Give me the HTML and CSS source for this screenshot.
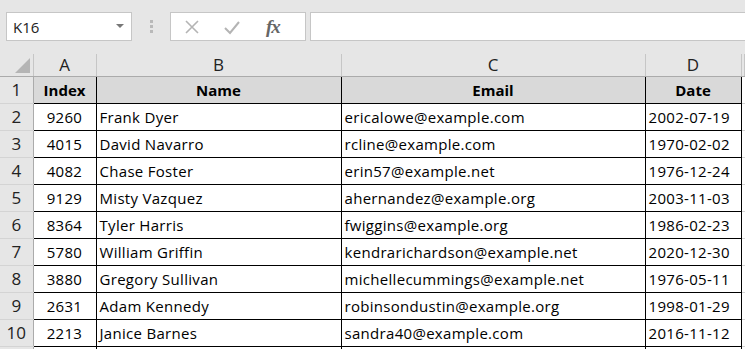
FILE: index.html
```html
<!DOCTYPE html>
<html>
<head>
<meta charset="utf-8">
<title>Sheet</title>
<link rel="stylesheet" href="styles.css">
</head>
<body>
<div class="toolbar">
  <div class="namebox">
    <span>K16</span>
    <svg class="caret" width="8" height="5" viewBox="0 0 8 5"><path d="M0 0h8L4 4z" fill="#777"/></svg>
  </div>
  <div class="grip"><i></i><i></i><i></i></div>
  <div class="fxbox">
    <svg width="16" height="16" viewBox="0 0 16 16"><path d="M2 2l12 12M14 2L2 14" stroke="#b4b4b4" stroke-width="1.6" fill="none"/></svg>
    <svg width="18" height="16" viewBox="0 0 18 16"><path d="M2 9l5 5L16 3" stroke="#b4b4b4" stroke-width="2" fill="none"/></svg>
    <span class="fx">fx</span>
  </div>
  <div class="formula"></div>
</div>

<div class="grid">
<table class="sheet">
  <colgroup>
    <col class="c-row"><col class="c-a"><col class="c-b"><col class="c-c"><col class="c-d"><col>
  </colgroup>
  <tr class="colhead">
    <th class="corner"><span class="tri"></span></th>
    <th>A</th><th>B</th><th>C</th><th>D</th><th></th>
  </tr>
  <tr class="title">
    <th class="rownum">1</th>
    <td>Index</td><td>Name</td><td>Email</td><td>Date</td><td class="empty"></td>
  </tr>
  <tr><th class="rownum">2</th><td class="num">9260</td><td>Frank Dyer</td><td>ericalowe@example.com</td><td>2002-07-19</td><td class="empty"></td></tr>
  <tr><th class="rownum">3</th><td class="num">4015</td><td>David Navarro</td><td>rcline@example.com</td><td>1970-02-02</td><td class="empty"></td></tr>
  <tr><th class="rownum">4</th><td class="num">4082</td><td>Chase Foster</td><td>erin57@example.net</td><td>1976-12-24</td><td class="empty"></td></tr>
  <tr><th class="rownum">5</th><td class="num">9129</td><td>Misty Vazquez</td><td>ahernandez@example.org</td><td>2003-11-03</td><td class="empty"></td></tr>
  <tr><th class="rownum">6</th><td class="num">8364</td><td>Tyler Harris</td><td>fwiggins@example.org</td><td>1986-02-23</td><td class="empty"></td></tr>
  <tr><th class="rownum">7</th><td class="num">5780</td><td>William Griffin</td><td>kendrarichardson@example.net</td><td>2020-12-30</td><td class="empty"></td></tr>
  <tr><th class="rownum">8</th><td class="num">3880</td><td>Gregory Sullivan</td><td>michellecummings@example.net</td><td>1976-05-11</td><td class="empty"></td></tr>
  <tr><th class="rownum">9</th><td class="num">2631</td><td>Adam Kennedy</td><td>robinsondustin@example.org</td><td>1998-01-29</td><td class="empty"></td></tr>
  <tr><th class="rownum">10</th><td class="num">2213</td><td>Janice Barnes</td><td>sandra40@example.com</td><td>2016-11-12</td><td class="empty"></td></tr>
  <tr class="last"><th class="rownum"></th><td></td><td></td><td></td><td></td><td class="empty"></td></tr>
</table>
</div>
</body>
</html>
```

FILE: styles.css
```css
html,
body {
	margin: 0;
	padding: 0;
	overflow: hidden;
	background: #fff;
	font-family: "Open Sans", Lato, sans-serif;
	font-size: 15px;
	color: #000;
}

.toolbar {
	height: 54px;
	box-sizing: border-box;
	padding: 12px 0 0 6px;
	background: #e6e6e6;
	display: flex;
	align-items: flex-start;
}

.namebox {
	width: 126px;
	height: 29px;
	box-sizing: border-box;
	border: 1px solid #c6c6c6;
	background: #fff;
	display: flex;
	align-items: center;
	justify-content: space-between;
	padding: 0 7px 0 6px;
	font-size: 15px;
	color: #222;
}

.grip {
	width: 38px;
	height: 29px;
	display: flex;
	flex-direction: column;
	align-items: center;
	justify-content: center;
	gap: 2px;
}

.grip i {
	width: 3px;
	height: 3px;
	background: #b9b9b9;
}

.fxbox {
	width: 136px;
	height: 29px;
	box-sizing: border-box;
	border: 1px solid #c6c6c6;
	background: #fff;
	display: flex;
	align-items: center;
	padding: 0 0 0 13px;
	gap: 23px;
}

.fx {
	font-family: "Liberation Serif", serif;
	font-style: italic;
	font-weight: bold;
	font-size: 19px;
	color: #666;
	letter-spacing: -1px;
	margin-left: 2px;
}

.formula {
	flex: 1;
	height: 29px;
	box-sizing: border-box;
	margin-left: 4px;
	border: 1px solid #c6c6c6;
	border-right: none;
	background: #fff;
}

.grid {
	height: 295px;
	overflow: hidden;
}

.sheet {
	border-collapse: collapse;
	table-layout: fixed;
	width: 745px;
}

.c-row { width: 33px; }
.c-a { width: 63px; }
.c-b { width: 245px; }
.c-c { width: 304px; }
.c-d { width: 96px; }

.sheet th,
.sheet td {
	padding: 0 0 0 3px;
	white-space: nowrap;
	overflow: hidden;
}

.colhead th {
	height: 22px;
	padding: 0;
	background: #e6e6e6;
	border-right: 1px solid #c6c6c6;
	border-bottom: 1px solid #ababab;
	font-weight: normal;
	font-size: 17px;
	color: #222;
	text-align: center;
	vertical-align: bottom;
	line-height: 22px;
}

.colhead .corner {
	position: relative;
}

.tri {
	position: absolute;
	right: 3px;
	bottom: 3px;
	width: 0;
	height: 0;
	border-left: 15px solid transparent;
	border-bottom: 15px solid #b5b5b5;
}

.rownum {
	height: 26px;
	padding: 0;
	background: #e6e6e6;
	border-bottom: 1px solid #d4d4d4;
	border-right: 1px solid #ababab;
	font-weight: normal;
	font-size: 17px;
	color: #222;
	text-align: center;
	line-height: 26px;
}

.sheet th.rownum {
	padding: 0;
}

.sheet td {
	border: 1px solid #000;
	height: 26px;
	line-height: 26px;
	letter-spacing: 0.3px;
}

.sheet td.num {
	text-align: center;
	padding: 0;
}

.sheet td.empty {
	border: none;
	border-left: 1px solid #000;
	border-bottom: 1px solid #d4d4d4;
}

.title td {
	background: #d9d9d9;
	font-weight: bold;
	text-align: center;
	padding: 0;
	letter-spacing: 0;
}

.title td.empty {
	background: #fff;
}
```
